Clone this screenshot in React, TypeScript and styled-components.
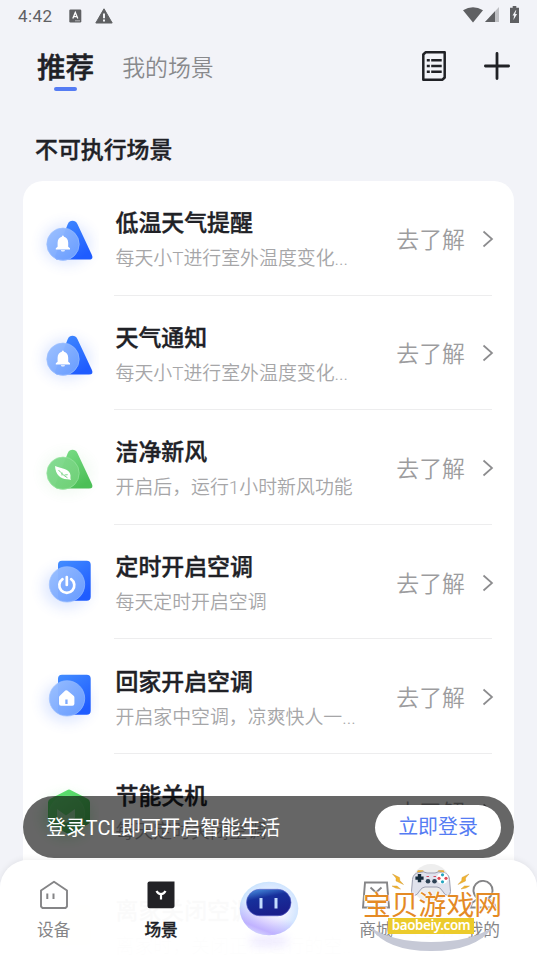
import React from 'react'
import styled, { createGlobalStyle } from 'styled-components'

type IconKind = 'bell' | 'leaf' | 'power' | 'home' | 'eco' | 'away'

const scenes: { title: string; desc: string; icon: IconKind }[] = [
  { title: '低温天气提醒', desc: '每天小T进行室外温度变化...', icon: 'bell' },
  { title: '天气通知', desc: '每天小T进行室外温度变化...', icon: 'bell' },
  { title: '洁净新风', desc: '开启后，运行1小时新风功能', icon: 'leaf' },
  { title: '定时开启空调', desc: '每天定时开启空调', icon: 'power' },
  { title: '回家开启空调', desc: '开启家中空调，凉爽快人一...', icon: 'home' },
  { title: '节能关机', desc: '每天定时关闭空调', icon: 'eco' },
  { title: '离家关闭空调', desc: '离家时，关闭正在运行的空...', icon: 'away' },
]

const Glyph = ({ kind }: { kind: IconKind }) => {
  switch (kind) {
    case 'bell':
      return (
        <g fill="#fff">
          <path d="M32.800 49.400v-1.200l1.800-1.500v-4c0-3.200 1.700-5.300 4.200-5.900.3-1.600 1.900-1.600 2.200 0 2.500.6 4.200 2.700 4.200 5.900v4l1.800 1.500v1.200z" />
          <path d="M37.800 50.200h4.200a2.100 1.300 0 0 1-4.200 0z" />
        </g>
      )
    case 'leaf':
      return (
        <g>
          <path d="M32 37c5 2.500 15.500 2.600 15.500 9.500 0 1.500-.3 3.200.5 4.500-1-.5-2.300-.8-4-.8-6.500 0-11.500-4.700-12-13.200z" fill="#fff" />
          <path d="M35.500 41c3 3.500 5.500 5.700 9 7.800M39 43.500v3M41.500 46l3.200-.3" fill="none" stroke="#7fd58a" strokeWidth="1" />
        </g>
      )
    case 'power':
      return (
        <g fill="none" stroke="#fff" strokeWidth="2.700" strokeLinecap="round">
          <path d="M39.500 35.200a7.500 7.500 0 1 0 8.600 0" />
          <path d="M43.800 33v8" />
        </g>
      )
    case 'home':
      return (
        <path
          fill="#fff"
          fillRule="evenodd"
          d="M42.300 32.600q1-.8 2 0l6.300 5.200q.8.700.8 1.700v6.300q0 2-2 2H38q-2 0-2-2v-6.300q0-1 .8-1.700zM42.300 41.500v4.500h2.300v-4.500z"
        />
      )
    case 'eco':
      return <path fill="#9fe0a8" d="M34 36l9 6.500 9-6.500v9l-9 5-9-5z" />
    default:
      return null
  }
}

const SceneIcon = ({ kind, uid }: { kind: IconKind; uid: string }) => {
  const green = kind === 'leaf' || kind === 'eco'
  const orange = kind === 'away'
  const top = green ? '#7fe08c' : orange ? '#fff0dd' : '#438dff'
  const end = green ? '#4cbf57' : orange ? '#ffe3c2' : '#1f5cff'
  const triangle = kind === 'bell' || kind === 'leaf'
  return (
    <svg width="76" height="76" viewBox="0 0 76 76">
      <defs>
        <linearGradient id={`${uid}b`} x1="0" y1="0" x2=".6" y2="1">
          <stop offset="0" stopColor={kind === 'eco' ? '#5ee673' : top} />
          <stop offset="1" stopColor={end} />
        </linearGradient>
        <linearGradient id={`${uid}c`} x1="0" y1="0" x2="1" y2="1">
          <stop offset="0" stopColor={green ? '#82db91' : orange ? '#fff0dd' : '#9abfff'} />
          <stop offset="1" stopColor={green ? '#70d176' : orange ? '#ffe3c2' : '#6b9eff'} />
        </linearGradient>
        <filter id={`${uid}f`} x="-50%" y="-50%" width="200%" height="200%">
          <feGaussianBlur stdDeviation="7" />
        </filter>
      </defs>
      <ellipse cx="44" cy="44" rx="24" ry="20" fill={kind === 'eco' ? '#5ee673' : end} opacity={kind === 'eco' ? 0.35 : green ? 0.08 : 0.14} filter={`url(#${uid}f)`} />
      {triangle ? (
        <path
          d="M49.500 20.800q-3.200 0-4.700 3.200L32.500 55q-1.300 4.600 2.500 4.600h31q4.800 0 2.900-4.600L54.400 24Q52.700 20.800 49.500 20.800z"
          fill={`url(#${uid}b)`}
        />
      ) : kind === 'eco' ? (
        <path d="M44 17.200q2-1.200 4 0l17 8.800q2 1.200 2 3.500v18q0 2.500-2 3.700l-17 9q-2 1-4 0l-17-9q-2-1.200-2-3.700v-18q0-2.300 2-3.500z" fill={`url(#${uid}b)`} />
      ) : (
        <rect x="35" y="16.800" width="32.700" height="40" rx="4" fill={`url(#${uid}b)`} />
      )}
      <circle
        cx={triangle ? 40 : 44}
        cy={triangle ? 44.2 : 40.4}
        r={triangle ? 16.2 : 17.7}
        fill={`url(#${uid}c)`}
        stroke={green ? '#9ae5a2' : orange ? '#fff0dd' : '#9bbeff'}
        strokeWidth=".7"
        opacity={kind === 'eco' ? 0.3 : 0.96}
      />
      <Glyph kind={kind} />
    </svg>
  )
}

const Robot = () => (
  <svg width="72" height="78" viewBox="0 0 72 78">
    <defs>
      <radialGradient id="orb" cx=".52" cy=".5" r=".55">
        <stop offset="0" stopColor="#fff" />
        <stop offset=".5" stopColor="#f0f3ff" />
        <stop offset=".85" stopColor="#d3e6ff" />
        <stop offset="1" stopColor="#c0e2fb" />
      </radialGradient>
      <linearGradient id="orbLow" x1=".65" y1=".2" x2=".3" y2="1">
        <stop offset=".45" stopColor="#bda4ff" stopOpacity="0" />
        <stop offset=".85" stopColor="#b9a0ff" stopOpacity=".75" />
        <stop offset="1" stopColor="#dcd0ff" stopOpacity=".7" />
      </linearGradient>
      <linearGradient id="face" x1="0" y1="0" x2=".35" y2="1">
        <stop offset="0" stopColor="#4f9be6" />
        <stop offset=".4" stopColor="#17309c" />
        <stop offset="1" stopColor="#1a1f8c" />
      </linearGradient>
      <filter id="orbBlur" x="-40%" y="-80%" width="180%" height="260%">
        <feGaussianBlur stdDeviation="5" />
      </filter>
    </defs>
    <ellipse cx="36" cy="66" rx="20" ry="6" fill="#d6ccff" opacity=".4" filter="url(#orbBlur)" />
    <ellipse cx="36" cy="33.500" rx="29.300" ry="26.700" fill="url(#orb)" />
    <ellipse cx="36" cy="33.500" rx="29.300" ry="26.700" fill="url(#orbLow)" />
    <rect x="13.500" y="14.300" width="44.500" height="26.500" rx="13.250" fill="url(#face)" stroke="#5a5fc9" strokeWidth=".6" />
    <rect x="26.500" y="23" width="3" height="10.500" fill="#c3dcff" />
    <rect x="41.500" y="23" width="3" height="10.500" fill="#c3dcff" />
  </svg>
)

const Controller = () => (
  <svg width="140" height="96" viewBox="0 0 140 96">
    <circle cx="69" cy="27" r="19" fill="#eeeeee" />
    <g fill="#f2b32e" stroke="#c9952f" strokeWidth=".4">
      <path d="M30.500 18l7 3.500.3 3 3.700 4-7.500-3.500 0-3z" />
      <path d="M107 18l-7 3.500-.3 3-3.700 4 7.500-3.500 0-3z" />
      <path d="M30 30l5 0 3.500 3-5-1z" />
      <path d="M107.500 30l-5 0-3.500 3 5-1z" />
      <rect x="55.500" y="14.500" width="6" height="2.500" rx="1" />
      <rect x="76" y="14.500" width="6" height="2.500" rx="1" />
    </g>
    <path
      d="M57 16.500q5-1.500 8 .5h8q3-2 8-.5 6 1 6.500 7l1 12q0 4-3 4-2.500 0-5-4.500-2.500-4-5.500-4h-12q-3 0-5.500 4-2.500 4.500-5 4.500-3 0-3-4l1-12q.5-6 6.500-7z"
      fill="#e0e2ec"
      stroke="#9c9fb0"
      strokeWidth="1"
    />
    <path d="M57.500 18v8.200M53.400 22.100h8.200" stroke="#172c3c" strokeWidth="3.400" />
    <g fill="#2d4254">
      <circle cx="66" cy="25.300" r="2.300" />
      <circle cx="72.500" cy="25.300" r="2.300" />
    </g>
    <path d="M64.500 20.500h2.500M71.500 20.500h2.500" stroke="#d34a62" strokeWidth="1.200" />
    <circle cx="80.500" cy="22.300" r="5.700" fill="#fff" />
    <circle cx="80.500" cy="18.800" r="1.600" fill="#24a5bf" />
    <circle cx="80.500" cy="25.800" r="1.600" fill="#24a5bf" />
    <circle cx="77" cy="22.300" r="1.600" fill="#e34b55" />
    <circle cx="84" cy="22.300" r="1.600" fill="#e34b55" />
    <path d="M8 71Q30 86 69 86t62-15Q114 95 69 95 24 95 8 71z" fill="#c6c9d6" />
  </svg>
)

const App = () => {
  return (
    <Screen>
      <GlobalStyle />
      <StatusBar>
        <span>4:42</span>
        <svg width="13" height="14" viewBox="0 0 13 14">
          <rect x=".3" y=".5" width="12" height="13" rx="1.200" fill="#5f6063" />
          <path d="M3.800 9.500L6.300 3.500l2.500 6M4.700 7.700h3.200" stroke="#fff" strokeWidth="1.300" fill="none" />
          <path d="M6 11.800h5" stroke="#c7c8cb" strokeWidth=".8" />
        </svg>
        <svg width="18" height="16" viewBox="0 0 18 16">
          <path d="M9 .8L17.200 15H.8z" fill="#5f6063" stroke="#5f6063" strokeLinejoin="round" />
          <path d="M9 5.500v4.700M9 11.500v2" stroke="#f2f3f7" strokeWidth="2" />
        </svg>
        <StatusRight>
          <svg width="20" height="16" viewBox="0 0 20 16">
            <path d="M0 3.300Q10-3 20 3.300L10 15.500z" fill="#5f6063" />
          </svg>
          <svg width="14" height="15" viewBox="0 0 14 15">
            <path d="M14 0v15H0z" fill="#bfc0c4" />
            <path d="M10 4.300V15H0z" fill="#5f6063" />
          </svg>
          <svg width="9" height="17" viewBox="0 0 9 17">
            <path d="M2.700 0h3.600v1.800H9V17H0V1.800h2.700z" fill="#5f6063" />
            <path d="M5.700 4.300L2.500 9.500h1.600l-.7 4.400 3.700-6H5.200l1.100-3.600z" fill="#f2f3f7" />
          </svg>
        </StatusRight>
      </StatusBar>
      <Header>
        <ActiveTab>推荐</ActiveTab>
        <Tab>我的场景</Tab>
        <Actions>
          <svg width="24" height="30" viewBox="0 0 24 30" fill="none" stroke="#202126">
            <path d="M3.500 1.300H22.700V26.500L20.500 28.700H1.300V3.500z" strokeWidth="2.500" strokeLinejoin="round" />
            <path d="M4.800 9.300h3M4.800 15h3M4.800 20.800h3M9.200 9.300h10.500M9.200 15h10.500M9.200 20.800h10.500" strokeWidth="2.600" />
          </svg>
          <svg width="26" height="28" viewBox="0 0 26 28" stroke="#202126" strokeWidth="2.800" strokeLinecap="round">
            <path d="M13 1.500v25M1.400 14h23.200" />
          </svg>
        </Actions>
      </Header>
      <SectionTitle>不可执行场景</SectionTitle>
      <Card>
        {scenes.map(({ title, desc, icon }, i) => (
          <Row key={title}>
            <SceneIcon kind={icon} uid={`s${i}`} />
            <RowBody>
              <Texts>
                <div className="title">{title}</div>
                <div className="desc">{desc}</div>
              </Texts>
              <More>
                去了解
                <svg width="12" height="18" viewBox="0 0 12 18" fill="none" stroke="#8c8c8e" strokeWidth="1.700">
                  <path d="M1.500 1.500L10 9l-8.500 7.500" />
                </svg>
              </More>
            </RowBody>
          </Row>
        ))}
      </Card>
      <LoginBar>
        <span>登录TCL即可开启智能生活</span>
        <LoginButton>立即登录</LoginButton>
      </LoginBar>
      <TabBar>
        <NavItem>
          <svg width="30" height="30" viewBox="0 0 30 30" fill="none" stroke="#858587" strokeWidth="1.900" strokeLinejoin="round">
            <path d="M2 10.500L15 1.800l13 8.700V26.500l-1.500 1.500h-23L2 26.500z" />
            <path d="M8.300 13.500V19M14.500 13.500V19" strokeWidth="2" />
          </svg>
          设备
        </NavItem>
        <NavItem $active>
          <svg width="30" height="30" viewBox="0 0 30 30">
            <path d="M3.500 1.500h25v24q0 2.800-2.500 2.800H3.500q-2 0-2-2V3.500q0-2 2-2z" fill="#222226" />
            <path d="M10.500 11q1.500 3 4.500 3t4.500-3M15 14v5.500" stroke="#fff" strokeWidth="2.200" fill="none" />
          </svg>
          场景
        </NavItem>
        <RobotItem>
          <Robot />
        </RobotItem>
        <NavItem>
          <svg width="30" height="30" viewBox="0 0 30 30" fill="none" stroke="#858587" strokeWidth="1.900">
            <path d="M4 2.500h22L28 27.500H2z" />
            <path d="M9.500 7.500l5.500 5 5.500-5" />
          </svg>
          商城
        </NavItem>
        <NavItem>
          <svg width="30" height="30" viewBox="0 0 30 30" fill="none" stroke="#858587" strokeWidth="1.900">
            <path d="M10 18.500a9.500 9.500 0 1 1 10 0l6 4.500 1.500 4.500h-25L4 23z" />
          </svg>
          我的
        </NavItem>
      </TabBar>
      <SiteMark>
        <Controller />
        <MarkName>宝贝游戏网</MarkName>
        <MarkUrl>baobeiy.com</MarkUrl>
      </SiteMark>
    </Screen>
  )
}

export default App

const GlobalStyle = createGlobalStyle`
  body {
    margin: 0;
  }

  svg {
    display: block;
    flex-shrink: 0;
  }
`

const Screen = styled.div`
  position: relative;
  width: 537px;
  height: 956px;
  overflow: hidden;
  background: #f2f3f8;
  color: #202126;
  font-family: Roboto, 'Noto Sans CJK SC', sans-serif;
  white-space: nowrap;
`

const StatusBar = styled.div`
  display: flex;
  align-items: center;
  height: 32px;
  padding: 0 18px;
  color: #5f6063;
  font-size: 17px;
  letter-spacing: 0.4px;

  span {
    width: 51px;
  }

  span + svg {
    margin-right: 13px;
  }
`

const StatusRight = styled.div`
  display: flex;
  align-items: center;
  margin-left: auto;
  padding-bottom: 3px;

  svg + svg {
    margin-left: 3px;
  }

  svg:last-child {
    margin-left: 11px;
  }

  svg:first-child {
    margin-right: -1px;
  }
`

const Header = styled.div`
  display: flex;
  align-items: center;
  height: 68px;
  padding: 0 27px 0 37px;
`

const ActiveTab = styled.div`
  display: flex;
  flex-direction: column;
  align-items: center;
  padding-top: 8px;
  font-size: 28.6px;
  font-weight: 500;
  line-height: 38px;
  -webkit-text-stroke: 0.5px;

  &::after {
    content: '';
    width: 23px;
    height: 4px;
    border-radius: 2px;
    background: #557cf3;
  }
`

const Tab = styled.div`
  margin-left: 28px;
  color: #88898c;
  font-size: 22.9px;
  font-weight: 350;
`

const Actions = styled.div`
  display: flex;
  align-items: center;
  gap: 38px;
  margin-left: auto;
`

const SectionTitle = styled.div`
  height: 81px;
  padding-left: 35px;
  font-size: 22.9px;
  font-weight: 500;
  line-height: 102px;
  -webkit-text-stroke: 0.4px;
`

const Card = styled.div`
  width: 491px;
  margin: 0 auto;
  border-radius: 20px;
  background: #fff;
`

const Row = styled.div`
  display: flex;
  height: 114.6px;

  > svg {
    margin: 19px 15px 0 0;
  }
`

const RowBody = styled.div`
  display: flex;
  flex: 1;
  align-items: center;
  justify-content: space-between;
  box-sizing: border-box;
  margin-right: 22px;
  border-bottom: 1px solid #ededee;
`

const Texts = styled.div`
  padding: 7px 0 0 1.5px;

  .title {
    font-size: 22.9px;
    font-weight: 500;
    line-height: 36px;
    -webkit-text-stroke: 0.4px;
  }

  .desc {
    color: #a6a6a8;
    font-size: 18.9px;
    font-weight: 350;
    line-height: 34px;
  }
`

const More = styled.div`
  display: flex;
  align-items: center;
  gap: 17px;
  color: #9c9c9e;
  font-size: 22.9px;
  font-weight: 350;

  svg {
    margin: 2px -2px 0 0;
  }
`

const LoginBar = styled.div`
  position: absolute;
  top: 796px;
  left: 23px;
  display: flex;
  align-items: center;
  justify-content: space-between;
  box-sizing: border-box;
  width: 491px;
  height: 62px;
  padding: 0 13px 0 23px;
  border-radius: 31px;
  background: rgba(0, 0, 0, 0.6);
  color: #fff;
  font-size: 19.9px;

  span {
    padding-bottom: 2px;
  }
`

const LoginButton = styled.div`
  width: 126px;
  border-radius: 23px;
  background: #fff;
  color: #557cf3;
  font-size: 19.9px;
  line-height: 45px;
  text-align: center;
`

const TabBar = styled.div`
  position: absolute;
  bottom: 0;
  left: 0;
  display: flex;
  width: 100%;
  height: 96px;
  border-radius: 28px 28px 0 0;
  background: rgba(255, 255, 255, 0.98);
  box-shadow: 0 -1px 6px rgba(0, 0, 0, 0.07);
`

const NavItem = styled.div<{ $active?: boolean }>`
  display: flex;
  flex: 1;
  flex-direction: column;
  align-items: center;
  padding-top: 20px;
  color: ${({ $active }) => ($active ? '#202126' : '#858587')};
  font-size: 16.7px;
  font-weight: ${({ $active }) => ($active ? 500 : 400)};
  line-height: 41px;
  -webkit-text-stroke: ${({ $active }) => ($active ? '0.3px' : '0')};
`

const RobotItem = styled.div`
  display: flex;
  flex: 1;
  justify-content: center;
  padding-top: 15px;
`

const SiteMark = styled.div`
  position: absolute;
  top: 856px;
  left: 362px;
  display: grid;
  width: 140px;
  height: 96px;

  > * {
    grid-area: 1 / 1;
  }
`

const MarkName = styled.div`
  padding: 31px 0 0 1px;
  color: #e48a25;
  font-size: 27.8px;
  line-height: 38px;
  text-shadow: 0 0 1px #fff, 1px 0 1px #fff, -1px 0 1px #fff;
`

const MarkUrl = styled.div`
  align-self: start;
  justify-self: start;
  width: 86px;
  height: 16px;
  margin: 62px 0 0 26px;
  background: #eccb2b;
  color: #fff;
  font-family: 'Noto Sans', sans-serif;
  font-size: 13.4px;
  font-weight: 600;
  letter-spacing: -0.4px;
  line-height: 15px;
  text-align: center;
`
